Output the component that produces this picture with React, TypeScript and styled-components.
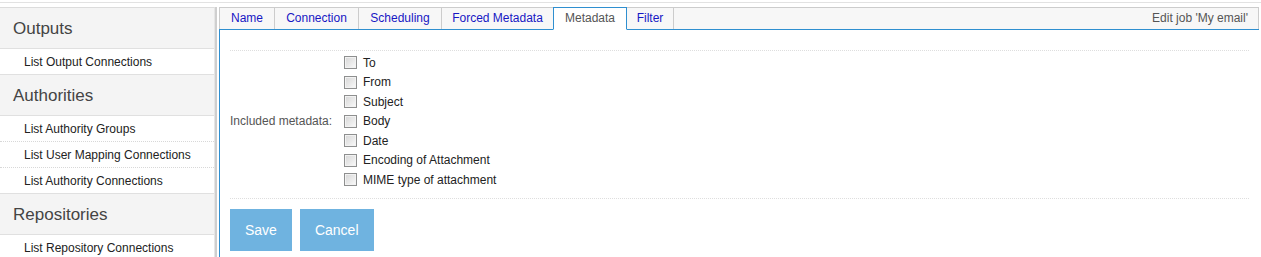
import React from "react";
import styled, { createGlobalStyle } from "styled-components";

const Global = createGlobalStyle`
  html, body { margin: 0; padding: 0; background: #fff; }
  body { font-family: "Liberation Sans", Arial, sans-serif; font-size: 12px; color: #333; }
`;

const Page = styled.div`
  margin-top: 2px;
  border-top: 1px solid #e2e2e2;
  padding-top: 4px;
  height: 255px;
  box-sizing: border-box;
  overflow: hidden;
`;

const Main = styled.div`
  display: flex;
  align-items: stretch;
  height: 100%;
`;

const Sidebar = styled.nav`
  width: 214px;
  flex: none;
  border-top: 1px solid #dcdcdc;
  border-right: 1px solid #e6e6e6;
`;

const Splitter = styled.div`
  width: 2px;
  flex: none;
  background: #cfcfcf;
  margin-right: 2px;
`;

const SectionHeader = styled.div`
  height: 40px;
  line-height: 42px;
  padding-left: 13px;
  font-size: 17px;
  color: #444;
  background: #f4f4f4;
  border-bottom: 1px solid #e0e0e0;
  overflow: hidden;
`;

const SideItem = styled.div<{ $last?: boolean }>`
  height: 25px;
  line-height: 27px;
  padding-left: 24px;
  font-size: 12px;
  color: #222;
  overflow: hidden;
  border-bottom: 1px ${(p) => (p.$last ? "solid #e0e0e0" : "dotted #d8d8d8")};
`;

const Content = styled.section`
  flex: 1;
  display: flex;
  flex-direction: column;
  margin-right: 2px;
`;

const TabBar = styled.div`
  display: flex;
  height: 22px;
  box-sizing: border-box;
  border-top: 1px solid #cccccc;
  border-right: 1px solid #cccccc;
  background: #f7f7f7;
  position: relative;
  z-index: 1;
`;

const Tab = styled.div<{ $active?: boolean; $w: number }>`
  width: ${(p) => p.$w + 1}px;
  height: 22px;
  box-sizing: border-box;
  margin-top: -1px;
  text-align: center;
  line-height: 20px;
  font-size: 12px;
  white-space: nowrap;
  color: ${(p) => (p.$active ? "#555" : "#1717c4")};
  background: ${(p) => (p.$active ? "#fff" : "#f7f7f7")};
  border: 1px solid ${(p) => (p.$active ? "#2f8fd0" : "#cccccc")};
  border-bottom: ${(p) => (p.$active ? "1px solid #fff" : "none")};
  margin-left: -1px;
  ${(p) => (p.$active ? "position: relative; z-index: 2; height: 23px;" : "")}
  &:first-child { margin-left: 0; }
`;

const TabFill = styled.div`
  flex: 1;
  text-align: right;
  padding-right: 10px;
  line-height: 20px;
  font-size: 12px;
  color: #555;
`;

const Panel = styled.div`
  flex: 1;
  border-top: 1px solid #2f8fd0;
  border-left: 1px solid #2f8fd0;
  padding: 20px 10px 0 10px;
`;

const FormRow = styled.div`
  display: flex;
  align-items: center;
  border-top: 1px dotted #dedede;
  border-bottom: 1px dotted #dedede;
  padding: 2px 0 8px 0;
`;

const FieldLabel = styled.div`
  width: 114px;
  flex: none;
  font-size: 12px;
  color: #555;
`;

const CheckList = styled.div`
  display: flex;
  flex-direction: column;
`;

const CheckRow = styled.label`
  display: flex;
  align-items: center;
  height: 19.5px;
  gap: 6px;
  font-size: 12px;
  color: #222;
`;

const Box = styled.span`
  width: 13px;
  height: 13px;
  box-sizing: border-box;
  border: 1px solid #8e8f8f;
  background: linear-gradient(135deg, #d6d6d6 0%, #ebebeb 60%, #fbfbfb 100%);
  box-shadow: inset 0 0 0 1px #f2f2f2;
  flex: none;
`;

const Buttons = styled.div`
  display: flex;
  gap: 8px;
  margin-top: 10px;
`;

const Button = styled.button`
  height: 42px;
  padding: 0 15px;
  border: none;
  background: #6fb3e0;
  color: #fff;
  font-family: "Liberation Sans", Arial, sans-serif;
  font-size: 14px;
`;

const sections = [
  { title: "Outputs", items: ["List Output Connections"] },
  {
    title: "Authorities",
    items: ["List Authority Groups", "List User Mapping Connections", "List Authority Connections"],
  },
  { title: "Repositories", items: ["List Repository Connections"] },
];

const tabs: [string, number][] = [
  ["Name", 55],
  ["Connection", 84],
  ["Scheduling", 83],
  ["Forced Metadata", 112],
  ["Metadata", 73],
  ["Filter", 47],
];
const fields = ["To", "From", "Subject", "Body", "Date", "Encoding of Attachment", "MIME type of attachment"];

export default function App() {
  return (
    <>
      <Global />
      <Page>
        <Main>
          <Sidebar>
            {sections.map((s) => (
              <div key={s.title}>
                <SectionHeader>{s.title}</SectionHeader>
                {s.items.map((it, i) => (
                  <SideItem key={it} $last={i === s.items.length - 1}>
                    {it}
                  </SideItem>
                ))}
              </div>
            ))}
          </Sidebar>
          <Splitter />
          <Content>
            <TabBar>
              {tabs.map(([t, w]) => (
                <Tab key={t} $w={w} $active={t === "Metadata"}>
                  {t}
                </Tab>
              ))}
              <TabFill>Edit job 'My email'</TabFill>
            </TabBar>
            <Panel>
              <FormRow>
                <FieldLabel>Included metadata:</FieldLabel>
                <CheckList>
                  {fields.map((f) => (
                    <CheckRow key={f}>
                      <Box />
                      {f}
                    </CheckRow>
                  ))}
                </CheckList>
              </FormRow>
              <Buttons>
                <Button>Save</Button>
                <Button>Cancel</Button>
              </Buttons>
            </Panel>
          </Content>
        </Main>
      </Page>
    </>
  );
}
